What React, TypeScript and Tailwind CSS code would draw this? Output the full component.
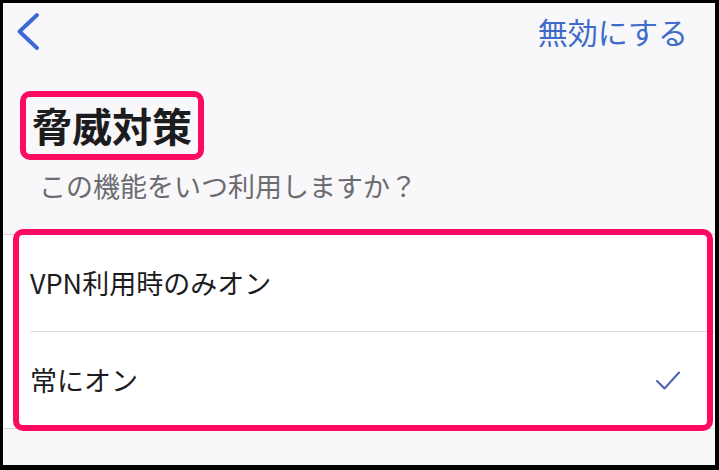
const options = [
  { label: 'VPN利用時のみオン', checked: false },
  { label: '常にオン', checked: true },
];

export default function App() {
  return (
    <div
      className="h-[470px] w-[719px] overflow-hidden border-b-[5px] border-l-[3px] border-r-[4px] border-t-[3px] border-black bg-[#f8f7f9]"
      style={{ fontFamily: "'Noto Sans CJK JP', 'Noto Sans', sans-serif" }}
    >
      <header className="flex h-[56px] items-center justify-between pl-[12px] pr-[27px]">
        <svg width="26" height="40" viewBox="0 0 26 40" fill="none" className="text-[#3b6ad8]">
          <path d="M22 4 L4.5 20.5 L22 37" stroke="currentColor" strokeWidth="4" strokeLinecap="round" strokeLinejoin="round" />
        </svg>
        <span className="text-[30px] leading-none text-[#3f6bc9]">無効にする</span>
      </header>

      <div className="ml-[17px] mt-[32px] inline-block rounded-[10px] border-[6px] border-[#fd0b63] px-[6px]">
        <h1 className="text-[40px] font-bold leading-[57px] text-[#1c1c1e]">脅威対策</h1>
      </div>

      <p className="mt-[8px] pl-[36px] text-[27px] leading-[36px] text-[#6c6c70]">この機能をいつ利用しますか？</p>

      <section className="relative mt-[30px] border-y border-[#d8d8dc] bg-white">
        {options.map((option, index) => (
          <div key={option.label} className="pl-[27px]">
            <div
              className={
                index === 0
                  ? 'flex h-[97px] items-center justify-between border-b border-[#dcdcdf] pr-[35px]'
                  : 'flex h-[96px] items-center justify-between pr-[35px]'
              }
            >
              <span className="text-[27px] text-[#1c1c1e]">{option.label}</span>
              {option.checked && (
                <svg width="24" height="19" viewBox="0 0 24 19" fill="none" className="text-[#4c5fb4]">
                  <path d="M1 10 L8.5 17.5 L23 1.5" stroke="currentColor" strokeWidth="2" strokeLinecap="round" strokeLinejoin="round" />
                </svg>
              )}
            </div>
          </div>
        ))}
        <div className="pointer-events-none absolute -bottom-[3px] -top-[6px] left-[10px] right-[2px] rounded-[10px] border-[6px] border-[#fd0b63]" />
      </section>
    </div>
  );
}
